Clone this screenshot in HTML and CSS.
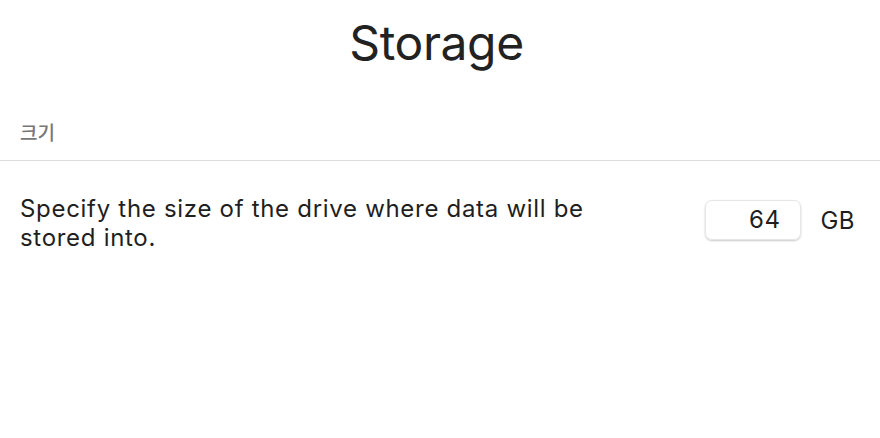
FILE: index.html
```html
<!DOCTYPE html>
<html>
<head>
<meta charset="utf-8">
<link rel="stylesheet" href="styles.css">
</head>
<body>
<div class="page">
  <h1 class="title">Storage</h1>
  <div class="section-label">크기</div>
  <div class="divider"></div>
  <div class="row">
    <p class="desc">Specify the size of the drive where data will be stored into.</p>
    <div class="field">
      <div class="input">64</div>
      <span class="unit">GB</span>
    </div>
  </div>
</div>
</body>
</html>
```
FILE: styles.css
```css
html, body {
  margin: 0;
  padding: 0;
  background: #ffffff;
}
body {
  font-family: Inter, "Noto Sans", "Noto Sans CJK KR", sans-serif;
  color: #222;
}
.page {
  width: 880px;
  height: 438px;
  display: flex;
  flex-direction: column;
}
.title {
  margin: 14px 0 0 0;
  padding-right: 7px;
  text-align: center;
  font-size: 48px;
  font-weight: 400;
  line-height: 58px;
  letter-spacing: -0.4px;
  color: #222;
}
.section-label {
  margin: 48px 0 0 20px;
  font-family: "Noto Sans CJK KR", sans-serif;
  font-size: 19px;
  font-weight: 500;
  line-height: 24px;
  color: #777;
}
.divider {
  margin-top: 16px;
  height: 1px;
  background: #dcdcdc;
}
.row {
  display: flex;
  align-items: flex-start;
  padding: 33px 25px 0 20px;
}
.desc {
  margin: 0;
  width: 600px;
  font-size: 24px;
  line-height: 29px;
  letter-spacing: 0.7px;
  color: #1f1f1f;
}
.field {
  margin-left: auto;
  margin-top: 6px;
  display: flex;
  align-items: center;
  gap: 19px;
}
.input {
  width: 96px;
  height: 40px;
  box-sizing: border-box;
  border-radius: 7px;
  border: 1px solid #e6e6e6;
  box-shadow: 0 1px 2px rgba(0,0,0,0.22);
  text-align: right;
  padding-right: 20px;
  font-size: 24px;
  line-height: 38px;
  letter-spacing: 0.5px;
  color: #1f1f1f;
}
.unit {
  font-size: 24px;
  letter-spacing: 0.5px;
  color: #1f1f1f;
}
```
